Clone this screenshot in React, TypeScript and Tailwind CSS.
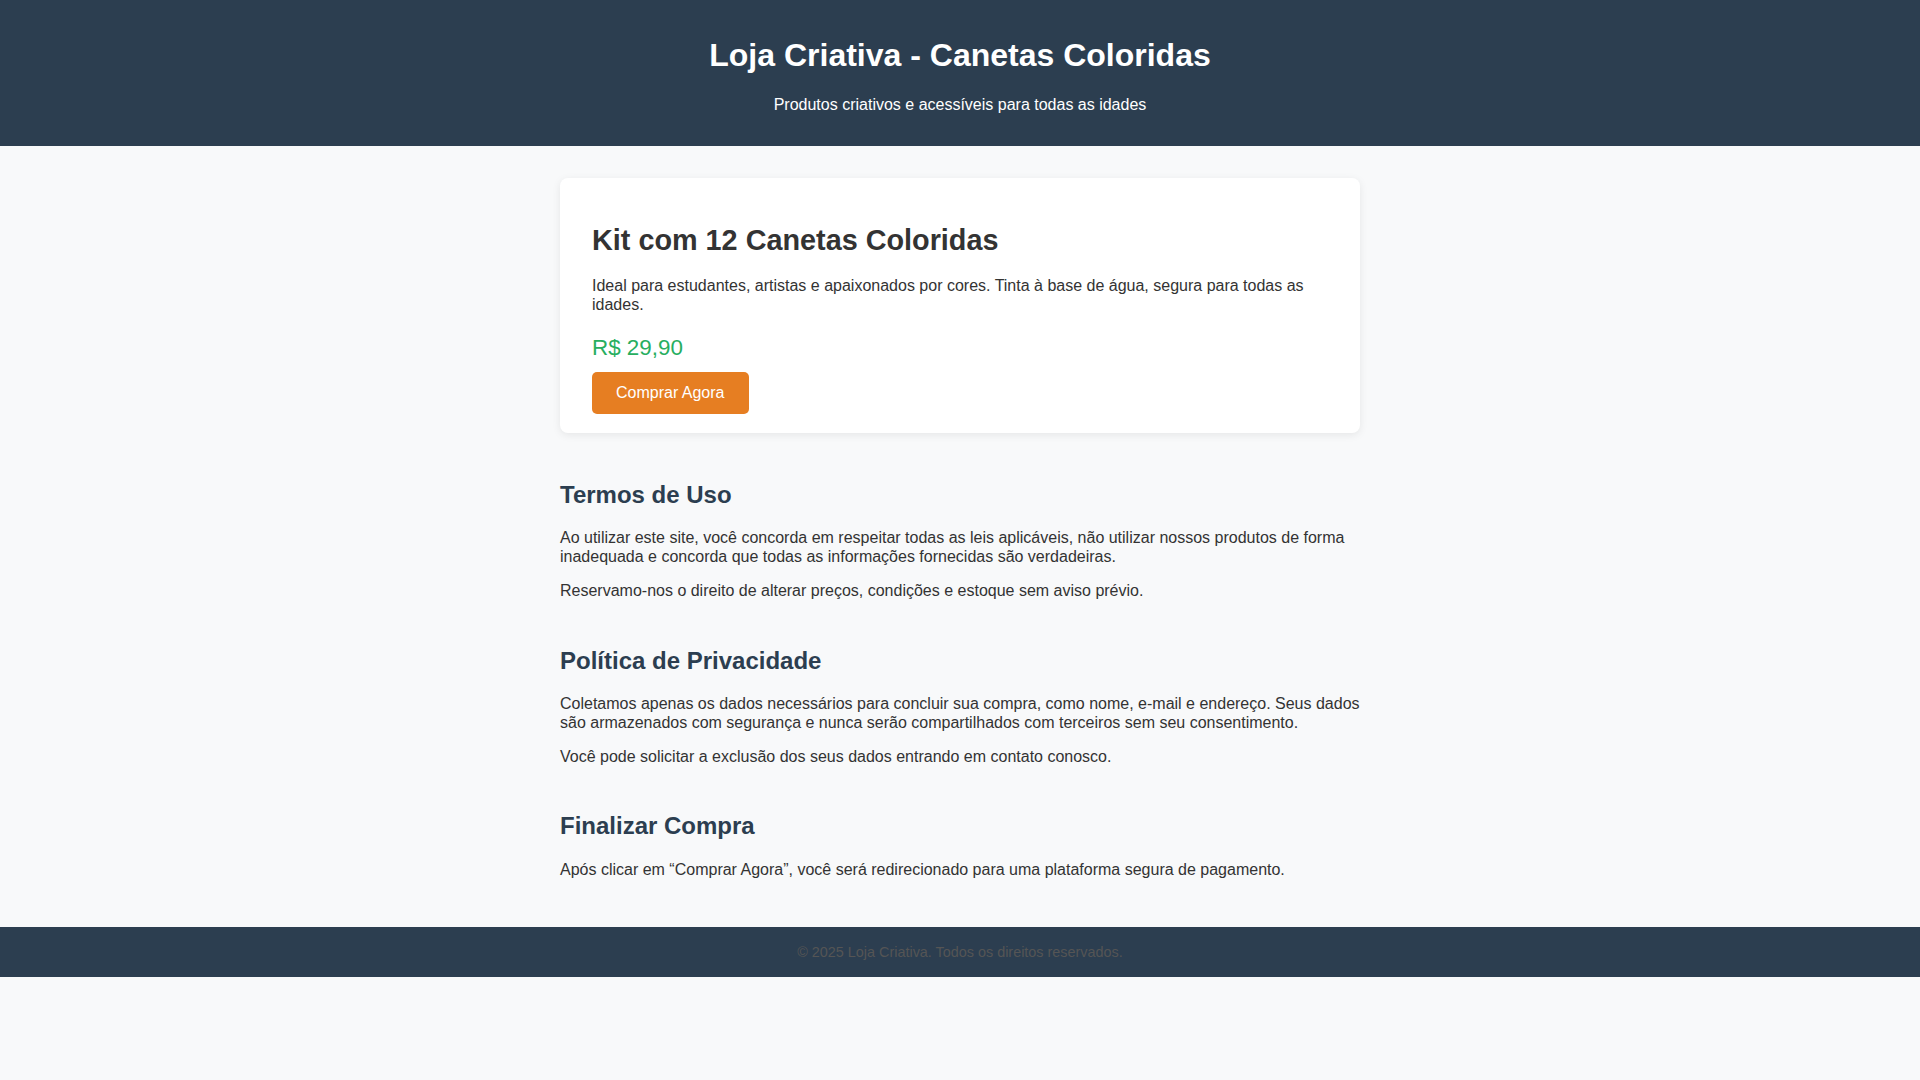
import React from 'react';

const sections = [
    {
        title: 'Termos de Uso',
        paragraphs: [
            'Ao utilizar este site, você concorda em respeitar todas as leis aplicáveis, não utilizar nossos produtos de forma inadequada e concorda que todas as informações fornecidas são verdadeiras.',
            'Reservamo-nos o direito de alterar preços, condições e estoque sem aviso prévio.',
        ],
    },
    {
        title: 'Política de Privacidade',
        paragraphs: [
            'Coletamos apenas os dados necessários para concluir sua compra, como nome, e-mail e endereço. Seus dados são armazenados com segurança e nunca serão compartilhados com terceiros sem seu consentimento.',
            'Você pode solicitar a exclusão dos seus dados entrando em contato conosco.',
        ],
    },
    {
        title: 'Finalizar Compra',
        paragraphs: [
            'Após clicar em “Comprar Agora”, você será redirecionado para uma plataforma segura de pagamento.',
        ],
    },
];

const App: React.FC = () => {
    return (
        <div className="min-h-screen w-full bg-[#f8f9fa] text-[#333] font-['Liberation_Sans',Arial,sans-serif] leading-[1.15]">
            {/* Header */}
            <header className="bg-[#2c3e50] text-white text-center pt-[37px] pb-[32px]">
                <h1 className="text-[32px] font-bold mb-[22px]">Loja Criativa - Canetas Coloridas</h1>
                <p className="text-[16px]">Produtos criativos e acessíveis para todas as idades</p>
            </header>

            {/* Content */}
            <main className="max-w-[800px] mx-auto pt-[32px] pb-[48px]">
                <div className="bg-white rounded-lg shadow-[0_2px_8px_rgba(0,0,0,0.08)] px-8 pt-[46px] pb-[19px]">
                    <h2 className="text-[28.8px] font-bold text-[#333] mb-[20px]">Kit com 12 Canetas Coloridas</h2>
                    <p className="text-[16px] mb-[21px]">
                        Ideal para estudantes, artistas e apaixonados por cores. Tinta à base de água, segura para todas as idades.
                    </p>
                    <p className="text-[22.4px] text-[#27ae60] mb-[11px]">R$ 29,90</p>
                    <button className="bg-[#e67e22] text-white text-[16px] px-6 py-3 rounded-[5px] leading-[18px]">
                        Comprar Agora
                    </button>
                </div>

                {sections.map((section) => (
                    <section key={section.title} className="mt-[46px] first-of-type:mt-[48px]">
                        <h2 className="text-[24px] font-bold text-[#2c3e50] mb-[21px]">{section.title}</h2>
                        <div className="flex flex-col gap-4">
                            {section.paragraphs.map((text, i) => (
                                <p key={i} className="text-[16px]">{text}</p>
                            ))}
                        </div>
                    </section>
                ))}
            </main>

            {/* Footer */}
            <footer className="bg-[#2c3e50] h-[50px] flex items-center justify-center">
                <p className="text-[14.4px] text-[#555]">© 2025 Loja Criativa. Todos os direitos reservados.</p>
            </footer>
        </div>
    );
};

export default App;
